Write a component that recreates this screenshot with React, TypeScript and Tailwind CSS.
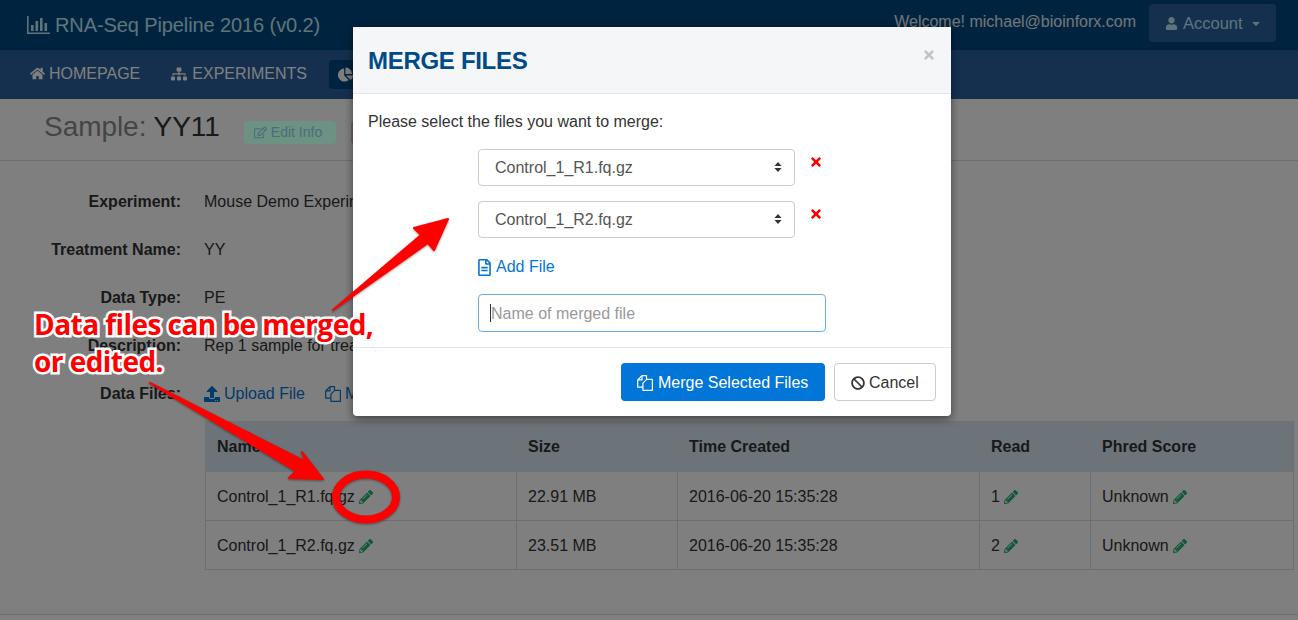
import { FaBan, FaChartPie, FaHome, FaPencilAlt, FaRegEdit, FaRegFileAlt, FaSitemap, FaTimes, FaUpload, FaUser } from 'react-icons/fa';

const infoRows = [
  { label: 'Experiment:', value: 'Mouse Demo Experiment' },
  { label: 'Treatment Name:', value: 'YY' },
  { label: 'Data Type:', value: 'PE' },
  { label: 'Description:', value: 'Rep 1 sample for treatment YY' },
];

const files = [
  { name: 'Control_1_R1.fq.gz', size: '22.91 MB', created: '2016-06-20 15:35:28', read: '1' },
  { name: 'Control_1_R2.fq.gz', size: '23.51 MB', created: '2016-06-20 15:35:28', read: '2' },
];

function Pencil() {
  return <FaPencilAlt className="inline-block ml-[4px] mb-[2px] text-[14px] text-[#24b070]" />;
}

function BarChartIcon() {
  return (
    <svg width="24" height="20" viewBox="0 0 24 20" className="inline-block" fill="currentColor">
      <path d="M1 1h1.6v16.4H24V19H1z" />
      <rect x="5" y="10" width="2.6" height="6" />
      <rect x="9.5" y="6" width="2.6" height="10" />
      <rect x="14" y="3" width="2.6" height="13" />
      <rect x="18.5" y="8" width="2.6" height="8" />
    </svg>
  );
}

// two overlapping sheets, the back one runs under the front one
function FilesIcon() {
  return (
    <svg width="16" height="16" viewBox="0 0 16 16" className="shrink-0" fill="none" stroke="currentColor" strokeWidth="1.2" strokeLinejoin="round">
      <path d="M9.5 4.3V.7H5L.7 5v7.2h5.2" />
      <path d="M9.7 4.3h5.7v11H5.9V8.2z" />
      <path d="M5 .9v4H1" />
    </svg>
  );
}

function SelectArrows() {
  return (
    <svg width="8" height="10" viewBox="0 0 8 10" className="absolute right-[13px] top-[13px] pointer-events-none" fill="#333">
      <path d="M4 0l3.6 4H.4zM4 10L.4 6h7.2z" />
    </svg>
  );
}

function FileSelect({ value }: { value: string }) {
  return (
    <div className="flex items-start">
      <div className="relative w-[317px]">
        <select defaultValue={value} className="appearance-none w-full h-[37px] pl-4 bg-white border border-[#ccc] rounded text-[16px] text-[#555]">
          <option>{value}</option>
        </select>
        <SelectArrows />
      </div>
      <FaTimes className="ml-[14px] mt-[6px] text-[14px] text-[#f00]" />
    </div>
  );
}

function MergeModal() {
  return (
    <div className="absolute left-[353px] top-[27px] w-[598px] h-[389px] bg-white rounded-b shadow-[0_3px_9px_rgba(0,0,0,0.5)] text-[16px] text-[#333]">
      <div className="flex items-start justify-between h-[67px] px-[15px] bg-[#f5f6f8] border-b border-[#e5e5e5]">
        <h4 className="mt-[20px] text-[24px] leading-[28px] font-bold tracking-[-0.3px] text-[#004b87]">MERGE FILES</h4>
        <FaTimes className="mt-[21px] text-[14px] text-[#c4c4c4]" />
      </div>
      <div className="px-[15px] h-[253px]">
        <p className="pt-[18px] leading-[20px]">Please select the files you want to merge:</p>
        <div className="ml-[110px] mt-[17px] flex flex-col gap-[15px]">
          <FileSelect value="Control_1_R1.fq.gz" />
          <FileSelect value="Control_1_R2.fq.gz" />
        </div>
        <a className="ml-[108px] mt-[19px] flex items-center gap-[3px] leading-[20px] text-[#0275d8]">
          <FaRegFileAlt className="text-[17px]" />
          Add File
        </a>
        <div className="relative ml-[110px] mt-[17px] w-[348px]">
          <input placeholder="Name of merged file" className="w-full h-[38px] px-3 pt-[2px] bg-white border border-[#66afe9] rounded text-[16px] placeholder:text-[#999]" />
          <span className="absolute left-[12px] top-[10px] w-px h-[18px] bg-[#333]" />
        </div>
      </div>
      <div className="flex justify-end gap-[9px] pt-[15px] pr-[15px] border-t border-[#e5e5e5]">
        <button className="flex items-center gap-[5px] w-[204px] h-[38px] pl-4 pt-[2px] bg-[#0275d8] rounded text-white">
          <FilesIcon />
          Merge Selected Files
        </button>
        <button className="flex items-center gap-[4px] w-[102px] h-[38px] pl-4 pt-[2px] bg-white border border-[#ccc] rounded text-[#333]">
          <FaBan className="text-[14px]" />
          Cancel
        </button>
      </div>
    </div>
  );
}

function Annotations() {
  return (
    <>
      <svg width="1298" height="620" viewBox="0 0 1298 620" className="absolute inset-0 pointer-events-none drop-shadow-[0_1px_1px_rgba(0,0,0,0.4)]">
        <polygon points="333,310 421,235 414,228 448,219 434,250 428,243" fill="#f00" stroke="#f00" strokeWidth="2" strokeLinejoin="round" />
        <polygon points="150,383 306,462 302,452 323,479 289,478 296,471" fill="#f00" stroke="#f00" strokeWidth="2" strokeLinejoin="round" />
        <ellipse cx="366" cy="497" rx="30" ry="22.5" fill="none" stroke="#f00" strokeWidth="8" />
      </svg>
      <div className="absolute left-[34px] top-[306px] text-[28px] leading-[37px] font-bold text-[#f00] font-['Open_Sans',sans-serif] tracking-[-0.55px] [-webkit-text-stroke:5px_white] [paint-order:stroke_fill] pointer-events-none">
        Data files can be merged,
        <br />
        or edited.
      </div>
    </>
  );
}

export default function App() {
  return (
    <div className="relative w-[1298px] h-[620px] overflow-hidden bg-white font-['Liberation_Sans',sans-serif] text-[16px] text-[#333]">
      <header className="flex items-center h-[50px] pl-[26px] pr-[22px] bg-[#004680]">
        <div className="flex items-center gap-[5px] text-[20px] tracking-[-0.1px] text-[#bfe6f5]">
          <BarChartIcon />
          RNA-Seq Pipeline 2016 (v0.2)
        </div>
        <div className="ml-auto flex items-center gap-[13px]">
          <span className="mb-[6px] text-white/90">Welcome! michael@bioinforx.com</span>
          <button className="flex items-center h-[38px] w-[127px] mb-[4px] pl-[16px] bg-[#2a5f9e] rounded text-[16.5px] text-[#bfe6f5]">
            <FaUser className="mr-[5px] text-[13px]" />
            Account
            <span className="ml-[9px] mt-[2px] border-x-[4px] border-t-[4px] border-x-transparent border-t-[#bfe6f5]" />
          </button>
        </div>
      </header>
      <nav className="flex items-center h-[49px] pl-[30px] gap-[31px] bg-[#2a5f9e] text-[16px] text-white">
        <a className="flex items-center gap-[4px] mb-[2px]"><FaHome className="text-[15px]" />HOMEPAGE</a>
        <a className="flex items-center gap-[5px] mb-[2px]"><FaSitemap className="text-[16px]" />EXPERIMENTS</a>
        <a className="flex items-center gap-[5px] h-[29px] -ml-[9px] px-[9px] rounded bg-[#004680]"><FaChartPie className="text-[15px]" />SAMPLES</a>
      </nav>
      <div className="flex items-center h-[62px] pl-[44px] border-b border-[#ddd]">
        <h1 className="mb-[6px] text-[28px] tracking-[-0.05px] text-[#8a8a8a]">Sample: <span className="text-[#333]">YY11</span></h1>
        <button className="relative z-10 flex items-center gap-[4px] w-[92px] h-[23px] ml-[24px] mt-[5px] pl-[10px] bg-[#6d9182] rounded-sm text-[14px] text-[#4a6f78]">
          <FaRegEdit className="text-[13px]" />
          Edit Info
        </button>
        <button className="h-[23px] w-[80px] ml-[15px] mt-[5px] bg-[#f2c4b8] rounded-sm text-[14px] text-[#a94442]">Delete</button>
      </div>
      <dl className="mt-[17px] flex flex-col">
        {infoRows.map((row) => (
          <div key={row.label} className="flex items-center h-[48px]">
            <dt className="w-[181px] text-right font-bold">{row.label}</dt>
            <dd className="ml-[23px]">{row.value}</dd>
          </div>
        ))}
        <div className="flex items-center h-[48px]">
          <dt className="w-[181px] text-right font-bold">Data Files:</dt>
          <dd className="ml-[23px] flex gap-[20px] text-[#0275d8]">
            <a className="flex items-center gap-[4px]"><FaUpload className="text-[16px]" />Upload File</a>
            <a className="flex items-center gap-[4px]"><FilesIcon />Merge Files</a>
          </dd>
        </div>
      </dl>
      <table className="ml-[205px] mt-[3px] w-[1089px] table-fixed border-collapse">
        <thead>
          <tr className="h-[50px] bg-[#d8e9f3] text-left">
            <th className="w-[311px] pl-[11px] pt-[1px] border border-[#dde4e8]">Name</th>
            <th className="w-[161px] pl-[11px] pt-[1px] border border-[#dde4e8]">Size</th>
            <th className="w-[302px] pl-[11px] pt-[1px] border border-[#dde4e8]">Time Created</th>
            <th className="w-[111px] pl-[11px] pt-[1px] border border-[#dde4e8]">Read</th>
            <th className="pl-[11px] pt-[1px] border border-[#dde4e8]">Phred Score</th>
          </tr>
        </thead>
        <tbody>
          {files.map((file) => (
            <tr key={file.name} className="h-[49px]">
              <td className="pl-[11px] pt-[2px] border border-[#ddd]">{file.name}<Pencil /></td>
              <td className="pl-[11px] pt-[2px] border border-[#ddd]">{file.size}</td>
              <td className="pl-[11px] pt-[2px] border border-[#ddd]">{file.created}</td>
              <td className="pl-[11px] pt-[2px] border border-[#ddd]">{file.read}<Pencil /></td>
              <td className="pl-[11px] pt-[2px] border border-[#ddd]">Unknown<Pencil /></td>
            </tr>
          ))}
        </tbody>
      </table>
      <div className="mt-[44px] border-t border-[#ddd]" />
      <div className="absolute inset-0 bg-black/50" />
      <MergeModal />
      <Annotations />
    </div>
  );
}
